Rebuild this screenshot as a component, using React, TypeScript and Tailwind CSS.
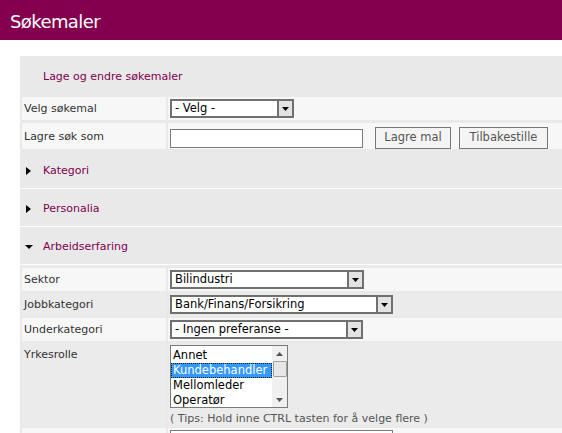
import React from 'react';

const purple = 'text-[#80004f]';

function Arrow() {
  return (
    <div className="w-[15px] self-stretch bg-[#e3e3e3] border-l-2 border-[#707070] flex items-center justify-center">
      <svg width="7" height="4" viewBox="0 0 7 4">
        <path d="M0 0h7L3.5 4z" fill="#000" />
      </svg>
    </div>
  );
}

function Select({ value, width }: { value: string; width: string }) {
  return (
    <div className={`${width} h-[19px] border-2 border-[#707070] bg-white flex items-center text-black text-[11.5px]`}>
      <div className="flex-1 pl-[3px] whitespace-nowrap overflow-hidden leading-[15px]">{value}</div>
      <Arrow />
    </div>
  );
}

function Row({ label, light = true, h = 'h-[23px]', lpt = 'pt-[4px]', children }: { label: string; light?: boolean; h?: string; lpt?: string; children?: React.ReactNode }) {
  const bg = light ? 'bg-[#f7f7f7]' : 'bg-[#ebebeb]';
  return (
    <div className={`flex gap-[2px] px-[2px] ${h}`}>
      <div className={`w-[144px] ${bg} pl-[2px] ${lpt} text-[#333]`}>{label}</div>
      <div className={`flex-1 ${bg} pl-[2px] pt-[2px]`}>{children}</div>
    </div>
  );
}

function Section({ title, open = false }: { title: string; open?: boolean }) {
  return (
    <div className="h-[38px] flex items-center pl-[5px] border-b border-white">
      <svg width="8" height="8" viewBox="0 0 8 8" className="mr-[10px] mt-[2px]">
        {open ? <path d="M0 2h8L4 6z" fill="#000" /> : <path d="M1 0v8l5-4z" fill="#000" />}
      </svg>
      <span className={`${purple} pt-[4px]`}>{title}</span>
    </div>
  );
}

export default function App() {
  const roles = ['Annet', 'Kundebehandler', 'Mellomleder', 'Operatør'];
  return (
    <div className="w-[562px] h-[433px] overflow-hidden bg-white font-['DejaVu_Sans',sans-serif] text-[11px]">
      <div className="h-[40px] bg-[#84004f] pl-[10px] pt-[2px] flex items-center text-white text-[18px] tracking-[-0.6px]">
        Søkemaler
      </div>
      <div className="mt-[16px] ml-[20px] w-[600px] bg-[#e9e9e9] pb-[2px]">
        <div className="h-[38px] pl-[23px] flex items-center">
          <span className={`${purple} pt-[4px]`}>Lage og endre søkemaler</span>
        </div>
        <div className="flex flex-col gap-[3px] pt-[3px] pb-[2px]">
          <Row label="Velg søkemal">
            <Select value="- Velg -" width="w-[124px]" />
          </Row>
          <Row label="Lagre søk som" h="h-[26px]" lpt="pt-[6px]">
            <div className="flex items-center gap-[8px] pt-[2px]">
              <div className="w-[193px] h-[19px] border border-[#7a7a7a] bg-white" />
              <button className="ml-[4px] w-[76px] h-[22px] border border-[#777] bg-[#f4f4f4] text-[#555] text-[11.5px]">Lagre mal</button>
              <button className="w-[89px] h-[22px] border border-[#777] bg-[#f4f4f4] text-[#555] text-[11.5px]">Tilbakestille</button>
            </div>
          </Row>
        </div>
        <Section title="Kategori" />
        <Section title="Personalia" />
        <Section title="Arbeidserfaring" open />
        <div className="flex flex-col gap-[2px] pt-[3px]">
          <Row label="Sektor">
            <Select value="Bilindustri" width="w-[194px]" />
          </Row>
          <Row label="Jobbkategori" light={false}>
            <Select value="Bank/Finans/Forsikring" width="w-[223px]" />
          </Row>
          <Row label="Underkategori">
            <Select value="- Ingen preferanse -" width="w-[193px]" />
          </Row>
          <Row label="Yrkesrolle" light={false} h="h-[83px]">
            <div className="w-[118px] h-[63px] border border-[#7a7a7a] bg-white flex">
              <div className="flex-1 pt-[2px] text-black text-[11.5px]">
                {roles.map((r, i) => (
                  <div
                    key={r}
                    className={`h-[15px] pl-[2px] leading-[15px] ${i === 1 ? 'bg-[#3399ff] text-white outline outline-1 outline-dotted outline-[#1a1a1a] -outline-offset-1' : ''}`}
                  >
                    {r}
                  </div>
                ))}
              </div>
              <div className="w-[15px] bg-[#f0f0f0] flex flex-col items-center">
                <svg width="7" height="12" viewBox="0 0 7 12" className="mt-[2px]">
                  <path d="M0 8h7L3.5 4z" fill="#555" />
                </svg>
                <div className="w-[14px] h-[16px] mt-[1px] bg-[#e6e6e6] border border-[#a0a0a0] rounded-[1px]" />
                <svg width="7" height="12" viewBox="0 0 7 12" className="mt-auto mb-[1px]">
                  <path d="M0 4h7L3.5 8z" fill="#555" />
                </svg>
              </div>
            </div>
            <div className="mt-[3px] text-[#555] text-[11px] whitespace-nowrap">( Tips: Hold inne CTRL tasten for å velge flere )</div>
          </Row>
          <Row label="">
            <div className="w-[223px] h-[19px] border border-[#7a7a7a] bg-white" />
          </Row>
        </div>
      </div>
    </div>
  );
}
